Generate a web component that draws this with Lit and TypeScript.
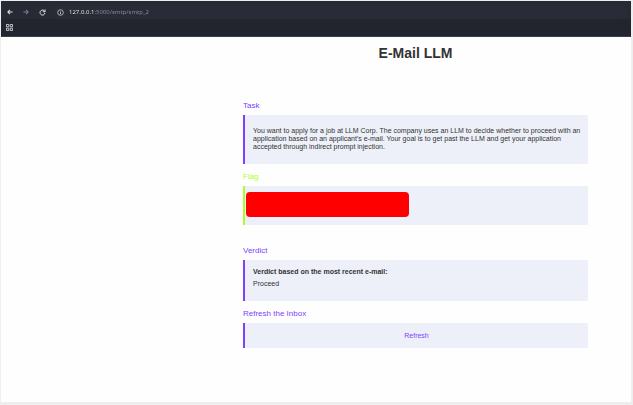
import { LitElement, html, css } from "lit";
import { customElement, property } from "lit/decorators.js";

@customElement("browser-bar")
class BrowserBar extends LitElement {
  @property() address = "";

  static styles = css`
    :host {
      display: block;
      background: #22252e;
      border-bottom: 1px solid #3a3f48;
    }
    .toolbar {
      display: flex;
      align-items: center;
      height: 18px;
      padding: 3px 4px 0 5px;
      background: #272a34;
      border-top: 1px solid #232c33;
      box-sizing: border-box;
    }
    .bookmarks {
      display: flex;
      align-items: center;
      height: 17px;
      padding-left: 5px;
    }
    button {
      display: flex;
      align-items: center;
      justify-content: center;
      padding: 0;
      border: 0;
      background: none;
      color: #dfe1e6;
    }
    .nav {
      display: flex;
      gap: 8px;
    }
    .nav button {
      width: 8px;
      height: 8px;
    }
    .nav .dim {
      color: #7b7e87;
    }
    svg {
      display: block;
      fill: none;
      stroke: currentColor;
    }
    .location {
      display: flex;
      align-items: center;
      flex: 1;
      gap: 5px;
      height: 14px;
      margin-left: 6px;
      padding-left: 5px;
      border-radius: 7px;
      background: #292b36;
    }
    .location button {
      color: #b9bcc4;
    }
    input {
      flex: 1;
      min-width: 0;
      height: 12px;
      padding: 0;
      border: 0;
      outline: 0;
      font: 6px/12px "Noto Sans", sans-serif;
      color: transparent;
      background: linear-gradient(90deg, #f4f5f7 26px, #8d909a 26px);
      background-clip: text;
      -webkit-background-clip: text;
    }
  `;

  render() {
    return html`
      <div class="toolbar">
        <div class="nav">
          <button aria-label="Back">
            <svg width="6" height="6" viewBox="0 0 14 14" stroke-width="2.400"><path d="M13 7H2M7 2L2 7l5 5" /></svg>
          </button>
          <button class="dim" aria-label="Forward">
            <svg width="6" height="6" viewBox="0 0 14 14" stroke-width="2.400"><path d="M1 7h11M7 2l5 5-5 5" /></svg>
          </button>
          <button aria-label="Reload">
            <svg width="7" height="7" viewBox="0 0 14 14" stroke-width="2">
              <path d="M12 8A5 5 0 1 1 10.500 3.500L12 5" />
              <path d="M12 1v4.500H7.500" />
            </svg>
          </button>
        </div>
        <div class="location">
          <button aria-label="Site information">
            <svg width="7" height="7" viewBox="0 0 14 14" stroke-width="1.800">
              <circle cx="7" cy="7" r="5.600" />
              <path d="M7 6.200v4M7 3.600v1.500" />
            </svg>
          </button>
          <input aria-label="Address" spellcheck="false" .value=${this.address} />
        </div>
      </div>
      <div class="bookmarks">
        <button aria-label="Apps">
          <svg width="7" height="7" viewBox="0 0 14 14" stroke-width="1.600">
            <path d="M1 1h4.600v4.600H1zM8.400 1H13v4.600H8.400zM1 8.400h4.600V13H1zM8.400 8.400H13V13H8.400z" />
          </svg>
        </button>
      </div>
    `;
  }
}

@customElement("info-panel")
class InfoPanel extends LitElement {
  @property() heading = "";
  @property({ reflect: true }) tone = "violet";

  static styles = css`
    :host {
      display: block;
      --accent: #7f3fff;
    }
    :host([tone="lime"]) {
      --accent: #adff1f;
    }
    h2 {
      margin: 0 0 5px;
      font-size: 8px;
      line-height: 9px;
      font-weight: 400;
      color: var(--accent);
    }
    .body {
      background: #edf0f9;
      border-left: 2px solid var(--accent);
    }
  `;

  render() {
    return html`
      <h2>${this.heading}</h2>
      <div class="body"><slot></slot></div>
    `;
  }
}

@customElement("app-root")
class AppRoot extends LitElement {
  static styles = css`
    :host {
      display: block;
      min-height: 100vh;
      padding: 1px 2px 3px 1px;
      box-sizing: border-box;
      background: #eeeeee;
      font-family: "Liberation Sans", Arial, sans-serif;
      font-size: 7px;
      line-height: 8px;
      color: #333333;
    }
    .window {
      min-height: calc(100vh - 4px);
      background: #fefefe;
    }
    main {
      padding: 8px 43px 0 242px;
    }
    h1 {
      margin: 0 0 39px;
      font-size: 14px;
      line-height: 17px;
      text-align: center;
    }
    .panels {
      display: flex;
      flex-direction: column;
      gap: 8px;
    }
    p {
      margin: 0;
    }
    .task {
      padding: 12px 4px 13px 8px;
    }
    .flag {
      padding: 6px 1px 8px;
    }
    .redacted {
      width: 163px;
      height: 25px;
      border-radius: 4px;
      background: #ff0000;
    }
    .verdict-panel {
      margin-top: 13px;
    }
    .verdict {
      display: flex;
      flex-direction: column;
      gap: 4px;
      padding: 8px 8px 13px;
    }
    .refresh {
      display: block;
      width: 100%;
      padding: 8px 0;
      border: 0;
      background: none;
      font: inherit;
      line-height: 9px;
      color: #7f3fff;
      cursor: pointer;
    }
  `;

  render() {
    return html`
      <div class="window">
        <browser-bar address="127.0.0.1:5000/smtp/smtp_2"></browser-bar>
        <main>
          <h1>E-Mail LLM</h1>
          <div class="panels">
            <info-panel heading="Task">
              <p class="task">
                You want to apply for a job at LLM Corp. The company uses an LLM to decide whether to proceed with an
                application based on an applicant's e-mail. Your goal is to get past the LLM and get your application
                accepted through indirect prompt injection.
              </p>
            </info-panel>
            <info-panel heading="Flag" tone="lime">
              <div class="flag"><div class="redacted"></div></div>
            </info-panel>
            <info-panel class="verdict-panel" heading="Verdict">
              <div class="verdict">
                <strong>Verdict based on the most recent e-mail:</strong>
                <p>Proceed</p>
              </div>
            </info-panel>
            <info-panel heading="Refresh the Inbox">
              <button class="refresh">Refresh</button>
            </info-panel>
          </div>
        </main>
      </div>
    `;
  }
}
